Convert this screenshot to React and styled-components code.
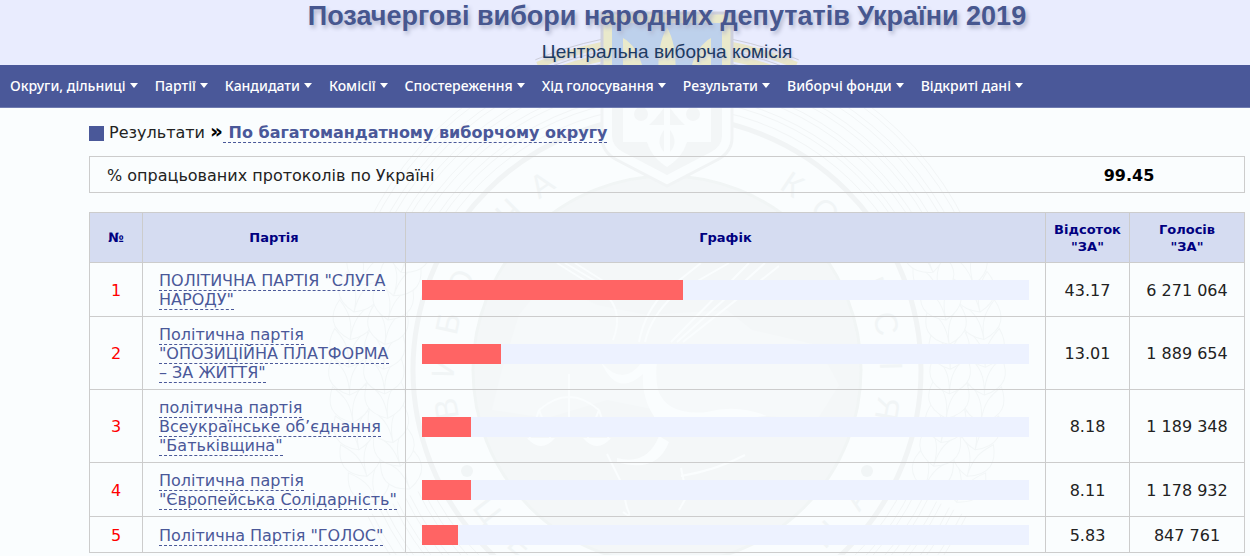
import React from 'react'
import styled, { createGlobalStyle } from 'styled-components';

const menu = [
    'Округи, дільниці', 'Партії', 'Кандидати', 'Комісії', 'Спостереження',
    'Хід голосування', 'Результати', 'Виборчі фонди', 'Відкриті дані'
];

const parties = [
    { name: 'ПОЛІТИЧНА ПАРТІЯ "СЛУГА НАРОДУ"', percent: '43.17', votes: '6 271 064', bar: 43 },
    { name: 'Політична партія "ОПОЗИЦІЙНА ПЛАТФОРМА – ЗА ЖИТТЯ"', percent: '13.01', votes: '1 889 654', bar: 13 },
    { name: 'політична партія Всеукраїнське об’єднання "Батьківщина"', percent: '8.18', votes: '1 189 348', bar: 8 },
    { name: 'Політична партія "Європейська Солідарність"', percent: '8.11', votes: '1 178 932', bar: 8 },
    { name: 'Політична Партія "ГОЛОС"', percent: '5.83', votes: '847 761', bar: 6 },
];

const rings = [264, 272, 277, 286, 291, 300, 305, 314, 319, 328, 333];
const grains = [0, 1, 2, 3, 4, 5, 6, 7, 8, 9];

// arc of the given radius, symmetric about the vertical axis
const arc = (r, angle, dir) => {
    const x = r * Math.sin(angle * Math.PI / 180);
    const y = r * Math.cos(angle * Math.PI / 180) * dir;
    return `M${-x} ${y} A${r} ${r} 0 0 ${dir < 0 ? 1 : 0} ${x} ${y}`;
};

// one ear of wheat, growing up along the side of the seal
function Wheat({ radius }) {
    return grains.map(g => (
        <g key={g} transform={`rotate(${-22 + g * 5}) translate(${-radius} 0)`}>
            <path d="M0 14 C-22 6 -24 -8 -16 -24 C-6 -14 0 -6 0 14 C22 6 24 -8 16 -24 C6 -14 0 -6 0 14" />
        </g>
    ));
}

function Shield({ frame, edge, field, trident }) {
    return (
        <g>
            <path d="M-65 -357 H65 V-232 Q65 -218 50 -210 L0 -184 L-50 -210 Q-65 -218 -65 -232 Z" fill={frame} stroke={edge} strokeWidth="3" />
            <path d="M-55 -347 H55 V-234 Q55 -224 44 -218 L0 -195 L-44 -218 Q-55 -224 -55 -234 Z" fill={field} />
            <path d="M-44 -332 C-26 -322 -20 -296 -20 -262 H-8 C-8 -300 -12 -320 0 -343 C12 -320 8 -300 8 -262 H20 C20 -296 26 -322 44 -332 V-228 H20 C16 -215 8 -208 0 -203 C-8 -208 -16 -215 -20 -228 H-44 Z" fill={trident} />
            <g fill={field}>
                <circle cx="-26" cy="-256" r="7" />
                <circle cx="26" cy="-256" r="7" />
                <path d="M-3 -240 Q-12 -228 -3 -218 Z M3 -240 Q12 -228 3 -218 Z M-3 -262 Q-12 -250 -18 -245 H-3 Z M3 -262 Q12 -250 18 -245 H3 Z" />
            </g>
        </g>
    );
}

function Letters({ word, from, step, bottom }) {
    return word.split('').map((c, i) => (
        <text key={i} transform={`rotate(${from + step * i})`} y={bottom ? 239 : -213}>{c}</text>
    ));
}

function Seal() {
    return (
        <SealSvg viewBox="-360 -360 720 720" aria-hidden="true">
            <g fill="none" stroke="#f2f5f6" strokeWidth="1">
                {rings.map(r => <path key={r} d={arc(r, 64, -1)} />)}
                {rings.map(r => <path key={-r} d={arc(r, 64, 1)} />)}
            </g>
            <circle r="254" fill="none" stroke="#f1f4f5" strokeWidth="5" />
            <g fill="#fafdfe" stroke="#f2f6f7" strokeWidth="1">
                <Wheat radius={318} />
                <Wheat radius={283} />
                <g transform="scale(-1 1)">
                    <Wheat radius={318} />
                    <Wheat radius={283} />
                </g>
            </g>
            <circle r="194" fill="#f4f7f8" stroke="#f1f5f5" strokeWidth="3" />
            <path d="M-165 0 L-148 -55 L-120 -90 L-70 -65 L-20 -55 L60 -60 L85 -40 L150 -25 L172 15 L150 50 L90 45 L40 60 L-10 40 L-60 30 L-120 48 L-175 40 Z" fill="#f6f9fa" />
            <g fill="none" stroke="#fafdfe" strokeWidth="2">
                <path d="M-110 -107 L-64 -78 M-102 -107 L-60 -82 M-92 -107 L-56 -84 M-58 -72 Q-44 -55 -54 -30" />
                <path d="M-28 -28 Q-22 -60 0 -80 L34 -107 M-22 -28 Q-16 -54 8 -76 L62 -107 M4 -28 L82 -107 M10 -28 L98 -107 M16 -28 L112 -104" />
                <path d="M-98 4 V52 M-128 40 Q-98 14 -68 40 M-128 40 L-138 70 M-128 40 L-116 70 M-68 40 L-80 70 M-68 40 L-58 70" />
                <path d="M-60 84 L-46 112 L-40 138 Q-34 150 -44 142 M14 98 L20 126 L12 140 M14 106 Q50 100 78 85" />
            </g>
            <g fill="#fafdfe">
                <path d="M-66 -8 Q-44 18 -25 -8 H-10 Q-12 6 -9 20 Q0 46 40 42 Q70 34 100 46 Q40 52 -4 58 Q-26 34 -24 4 Q-50 28 -66 -8 Z" />
                <path d="M-140 68 H-112 Q-126 84 -140 68 Z M-84 68 H-56 Q-70 84 -84 68 Z M-50 88 Q-20 96 -8 66 L2 72 Q-10 104 -50 92 Z" />
            </g>
            <g fill="#f1f5f6">
                <circle cx="-200" cy="101" r="6" />
                <circle cx="200" cy="101" r="6" />
                <Letters word="ВИБОРЧА" from={-100} step={11} />
                <Letters word="КОМІСІЯ" from={34} step={11} />
                <Letters word="ЦЕНТРАЛЬНА" from={52} step={-12} bottom />
            </g>
            <Shield frame="#fafdfe" edge="#f1f4f5" field="#f3f6f7" trident="#fafdfe" />
        </SealSvg>
    );
}

function App() {
    return (
        <Page>
            <GlobalStyle />
            <Header>
                <Crest viewBox="-150 -370 300 65" aria-hidden="true">
                    <g fill="none" stroke="#e9e6c8" strokeWidth="7">
                        <path d={arc(331, 23, -1)} />
                        <path d={arc(319, 23, -1)} />
                    </g>
                    <g fill="none" stroke="#cccdd8" strokeWidth="1">
                        <path d={arc(337, 23, -1)} />
                        <path d={arc(325, 23, -1)} />
                        <path d={arc(313, 23, -1)} />
                    </g>
                    <Shield frame="#e9e9cb" edge="#cfd1dd" field="#bdd1ec" trident="#e9e9cb" />
                </Crest>
                <Title>Позачергові вибори народних депутатів України 2019</Title>
                <Subtitle>Центральна виборча комісія</Subtitle>
            </Header>
            <Nav>
                {menu.map(m => <MenuItem key={m} type="button">{m}<Caret /></MenuItem>)}
            </Nav>
            <Main>
                <Seal />
                <Crumbs>
                    <Square />
                    <span>Результати <Arrow>»</Arrow><CrumbLink href="#okrug">&nbsp;По багатомандатному виборчому округу</CrumbLink></span>
                </Crumbs>
                <Summary>
                    <span>% опрацьованих протоколів по Україні</span>
                    <Total>99.45</Total>
                </Summary>
                <Table>
                    <colgroup>
                        <Col $w="53px" /><Col $w="263px" /><Col /><Col $w="84px" /><Col $w="115px" />
                    </colgroup>
                    <thead>
                        <tr>
                            <Th>№</Th><Th>Партія</Th><Th>Графік</Th><Th>Відсоток "ЗА"</Th><Th>Голосів<br />"ЗА"</Th>
                        </tr>
                    </thead>
                    <tbody>
                        {parties.map((p, i) => (
                            <tr key={p.name}>
                                <Td $color="#ff0000">{i + 1}</Td>
                                <NameTd><PartyLink href="#party">{p.name}</PartyLink></NameTd>
                                <Td><Track><Bar style={{ width: p.bar + '%' }} /></Track></Td>
                                <Td>{p.percent}</Td>
                                <Td>{p.votes}</Td>
                            </tr>
                        ))}
                    </tbody>
                </Table>
            </Main>
        </Page>
    )
}

export default App

const GlobalStyle = createGlobalStyle`
    body {
        margin: 0;
        background: #fafdfe;
    }
    * {
        box-sizing: border-box;
    }
`
const Page = styled.div`
    font-family: "DejaVu Sans", Verdana, sans-serif;
    font-size: 16px;
    color: #222222;
`
const Header = styled.header`
    position: relative;
    z-index: 0;
    height: 65px;
    padding: 0 5px 0 89px;
    background: #e9ecfe;
    text-align: center;
    font-family: "Liberation Sans", Arial, sans-serif;
`
const Crest = styled.svg`
    position: absolute;
    z-index: -1;
    top: 0;
    left: calc(50% + 42px);
    width: 300px;
    height: 65px;
    margin-left: -150px;
`
const Title = styled.h1`
    margin: 0;
    font-size: 27px;
    line-height: 32px;
    color: #47578f;
    text-shadow: 2px 3px 4px #b0b4cc;
`
const Subtitle = styled.div`
    margin-top: 8px;
    font-size: 19px;
    line-height: 24px;
    color: #1c3a63;
    text-shadow: 1px 2px 3px #c4c8dc;
`
const Nav = styled.nav`
    height: 43px;
    display: flex;
    align-items: center;
    gap: 17px;
    padding: 0 10px 2px;
    background: #4a5899;
    border-bottom: 1px solid #6f7bb0;
`
const MenuItem = styled.button`
    display: flex;
    align-items: center;
    gap: 4px;
    padding: 0;
    border: 0;
    background: none;
    color: #ffffff;
    font: 500 14px "Noto Sans", sans-serif;
    white-space: nowrap;
`
const Caret = styled.span`
    border: 4px solid transparent;
    border-top: 5px solid #ffffff;
    border-bottom: 0;
`
const Main = styled.main`
    position: relative;
    padding: 15px 5px 2px 89px;
    overflow: hidden;
`
const SealSvg = styled.svg`
    position: absolute;
    z-index: -1;
    top: -98px;
    left: calc(50% + 42px);
    width: 720px;
    margin-left: -360px;
    font: 32px "Liberation Sans", Arial, sans-serif;
    text-anchor: middle;
`
const Crumbs = styled.div`
    display: flex;
    align-items: center;
    height: 20px;
    line-height: 20px;
    white-space: pre;
`
const Square = styled.span`
    width: 15px;
    height: 15px;
    margin-right: 5px;
    background: #4a5899;
`
const Arrow = styled.b`
    font-size: 20px;
    line-height: 16px;
    color: #000000;
`
const CrumbLink = styled.a`
    color: #4a5899;
    font-weight: bold;
    text-decoration: none;
    border-bottom: 1px dashed #4a5899;
`
const Summary = styled.div`
    display: flex;
    align-items: center;
    justify-content: space-between;
    height: 37px;
    margin: 13px 0 19px;
    padding: 2px 17px 0;
    border: 1px solid #cccccc;
`
const Total = styled.b`
    width: 196px;
    text-align: center;
    color: #000000;
`
const Table = styled.table`
    width: 100%;
    table-layout: fixed;
    border-collapse: collapse;
`
const Col = styled.col`
    width: ${props => props.$w || 'auto'};
`
const Th = styled.th`
    height: 50px;
    padding: 0 8px;
    background: #d5dcf1;
    border: 1px solid #cccccc;
    border-bottom: 0;
    color: #000080;
    font-size: 13px;
    line-height: 17px;
`
const Td = styled.td`
    padding: 8px 16px 7px;
    border: 1px solid #cccccc;
    color: ${props => props.$color || '#222222'};
    text-align: center;
    line-height: 19px;
    white-space: nowrap;
`
const NameTd = styled(Td)`
    padding-right: 4px;
    text-align: left;
    white-space: normal;
`
const PartyLink = styled.a`
    color: #4a5899;
    text-decoration: none;
    border-bottom: 1px dashed #4a5899;
`
const Track = styled.div`
    height: 20px;
    background: #edf2ff;
`
const Bar = styled.div`
    height: 100%;
    background: #ff6464;
`
